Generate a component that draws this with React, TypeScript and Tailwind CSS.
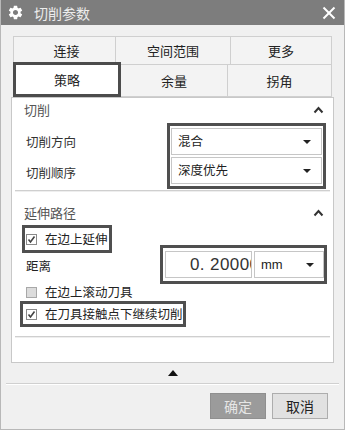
import React from "react";
import { MdSettings } from "react-icons/md";

const font = { fontFamily: '"Noto Sans CJK SC", "Noto Sans", sans-serif' };

function Caret() {
  return (
    <svg width="11" height="8" viewBox="0 0 11 8">
      <polyline points="1.5,6.5 5.5,2 9.5,6.5" fill="none" stroke="#333" strokeWidth="2" />
    </svg>
  );
}

function DownTri() {
  return (
    <svg width="8" height="4" viewBox="0 0 8 4">
      <polygon points="0,0 8,0 4,4" fill="#222" />
    </svg>
  );
}

function Check({ checked }: { checked: boolean }) {
  if (!checked)
    return <div className="w-[11px] h-[11px] border border-[#a8a8a8] bg-[#dcdcdc] shrink-0" />;
  return (
    <div className="w-[11px] h-[11px] border border-[#8a8a8a] bg-white shrink-0 flex items-center justify-center">
      <svg width="9" height="9" viewBox="0 0 9 9">
        <polyline points="1.5,4.5 3.5,7 7.5,1.5" fill="none" stroke="#444" strokeWidth="1.6" />
      </svg>
    </div>
  );
}

function Select({ label }: { label: string }) {
  return (
    <div className="h-[27px] bg-white border border-[#c6c6c6] flex items-center justify-between pl-[6px] pr-[10px] text-[12.5px] text-[#222] whitespace-nowrap">
      <span>{label}</span>
      <DownTri />
    </div>
  );
}

export default function App() {
  return (
    <div className="w-[345px] h-[430px] bg-[#f0f0f0] flex flex-col border-x border-b border-[#b8b8b8] overflow-hidden whitespace-nowrap" style={font}>
      {/* Title bar */}
      <div className="h-[25px] bg-[#7d7d7d] flex items-center pl-[6px] pr-[8px] shrink-0">
        <MdSettings className="text-white" size={17} />
        <span className="ml-[10px] text-[14px] text-[#ececec] leading-none">切削参数</span>
        <div className="flex-1" />
        <svg width="14" height="14" viewBox="0 0 14 14">
          <line x1="1.5" y1="1.5" x2="12.5" y2="12.5" stroke="white" strokeWidth="2" />
          <line x1="12.5" y1="1.5" x2="1.5" y2="12.5" stroke="white" strokeWidth="2" />
        </svg>
      </div>

      {/* Tabs */}
      <div className="pt-[11px] pl-[12px] text-[13px] text-[#222]">
        <div className="flex h-[29px]">
          <div className="w-[103px] border border-[#cfcfcf] bg-[#f3f3f3] flex items-center justify-center pl-[4px]">连接</div>
          <div className="w-[115px] border-y border-r border-[#cfcfcf] bg-[#f3f3f3] flex items-center justify-center">空间范围</div>
          <div className="w-[101px] border-y border-r border-[#cfcfcf] bg-[#f3f3f3] flex items-center justify-center">更多</div>
        </div>
        <div className="flex h-[32px]">
          <div className="w-[108px] h-[35px] -mt-[3px] border-[3px] border-[#4c4c4c] bg-white flex items-center justify-center relative z-10">策略</div>
          <div className="w-[107px] border-b border-r border-[#cfcfcf] bg-[#f3f3f3] flex items-center justify-center">余量</div>
          <div className="w-[104px] border-b border-r border-[#cfcfcf] bg-[#f3f3f3] flex items-center justify-center">拐角</div>
        </div>
      </div>

      {/* Panel */}
      <div className="ml-[10px] w-[323px] h-[266px] bg-white border border-[#c8c8c8] text-[12.5px] text-[#333] shrink-0">
        {/* Section 1 */}
        <div className="h-[24px] flex items-center justify-between pl-[12px] pr-[9px] text-[#555] text-[13px]">
          <span>切削</span>
          <Caret />
        </div>
        <div className="flex h-[68px]">
          <div className="w-[155px] flex flex-col pl-[14px] pt-[9px]">
            <div className="h-[22px] flex items-center">切削方向</div>
            <div className="h-[28px] mt-[6px] flex items-center">切削顺序</div>
          </div>
          <div className="w-[159px] h-[66px] mt-[1px] border-[3px] border-[#4f4f4f] px-[1px] py-[2px] flex flex-col gap-[2px]">
            <Select label="混合" />
            <Select label="深度优先" />
          </div>
        </div>
        <div className="mx-[3px] h-[2px] border-t border-[#cfcfcf] bg-[#eeeeee]" />

        {/* Section 2 */}
        <div className="pt-[12px] pb-[4px] flex items-center justify-between pl-[12px] pr-[9px] text-[#555] text-[13px]">
          <span className="leading-[17px]">延伸路径</span>
          <Caret />
        </div>
        <div className="flex">
          <div className="w-[148px] flex flex-col">
            <div className="ml-[10px] w-[90px] h-[28px] border-[3px] border-[#4f4f4f] flex items-center pl-[1px] gap-[8px] text-[#222]">
              <Check checked />
              <span>在边上延伸</span>
            </div>
            <div className="h-[26px] flex items-center pl-[14px] text-[#222]">距离</div>
          </div>
          <div className="mt-[20px] w-[167px] h-[39px] border-[3px] border-[#4f4f4f] flex items-center gap-[2px] pl-[2px]">
            <div className="w-[87px] h-[27px] bg-white border border-[#c6c6c6] overflow-hidden whitespace-nowrap pl-[24px] flex items-center text-[17px] tracking-[0.4px] text-[#333] leading-none" style={{ fontFamily: '"Liberation Sans", sans-serif' }}>
              0. 20000
            </div>
            <div className="w-[70px] h-[27px] bg-white border border-[#c6c6c6] flex items-center justify-between pl-[6px] pr-[9px] text-[13px] text-[#222]">
              <span style={{ fontFamily: '"Liberation Sans", sans-serif' }}>mm</span>
              <DownTri />
            </div>
          </div>
        </div>
        <div className="h-[16px] flex items-center pl-[14px] gap-[8px] text-[#222]">
          <Check checked={false} />
          <span>在边上滚动刀具</span>
        </div>
        <div className="ml-[8px] mt-[1px] w-[166px] h-[26px] border-[3px] border-[#4f4f4f] flex items-center pl-[3px] gap-[8px] text-[#222]">
          <Check checked />
          <span>在刀具接触点下继续切削</span>
        </div>
        <div className="mt-[9px] mx-[3px] h-[2px] border-t border-[#cfcfcf] bg-[#eeeeee]" />
      </div>

      {/* Collapse arrow */}
      <div className="h-[20px] flex items-center justify-center shrink-0">
        <svg width="10" height="6" viewBox="0 0 10 6">
          <polygon points="0,6 10,6 5,0" fill="#111" />
        </svg>
      </div>
      <div className="mx-[5px] h-[2px] border-t border-[#d0d0d0] bg-white shrink-0" />

      {/* Buttons */}
      <div className="flex justify-end gap-[6px] pr-[16px] pt-[8px]">
        <div className="w-[56px] h-[26px] bg-[#9b9b9b] border border-[#8f8f8f] flex items-center justify-center text-[14px] text-[#e6e6e6]">确定</div>
        <div className="w-[56px] h-[26px] bg-[#e1e1e1] border border-[#adadad] flex items-center justify-center text-[14px] text-[#222]">取消</div>
      </div>
    </div>
  );
}
